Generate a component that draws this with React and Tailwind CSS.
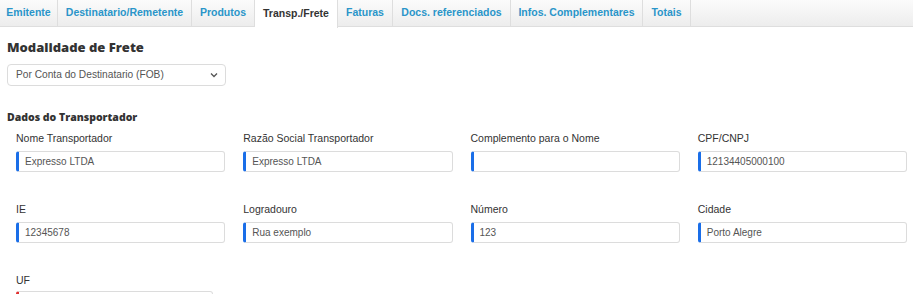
import React from "react";

const tabs = [
  { label: "Emitente", w: "w-[58px]" },
  { label: "Destinatario/Remetente", w: "w-[134px]" },
  { label: "Produtos", w: "w-[63px]" },
  { label: "Transp./Frete", w: "w-[83px]", active: true },
  { label: "Faturas", w: "w-[55px]" },
  { label: "Docs. referenciados", w: "w-[118px]" },
  { label: "Infos. Complementares", w: "w-[132px]" },
  { label: "Totais", w: "w-[48px]" },
];

const rows = [
  [
    { label: "Nome Transportador", value: "Expresso LTDA" },
    { label: "Razão Social Transportador", value: "Expresso LTDA" },
    { label: "Complemento para o Nome", value: "" },
    { label: "CPF/CNPJ", value: "12134405000100" },
  ],
  [
    { label: "IE", value: "12345678" },
    { label: "Logradouro", value: "Rua exemplo" },
    { label: "Número", value: "123" },
    { label: "Cidade", value: "Porto Alegre" },
  ],
];

const Field = ({ label, value }) => (
  <div className="flex flex-col">
    <label className="text-[10.5px] leading-[14px] text-[#333] mb-[6px]">{label}</label>
    <div className="h-[21px] rounded-[3px] border border-[#dcdcdc] border-l-[3px] border-l-[#1a6ee8] flex items-center px-[6px] text-[10px] text-[#555]">
      {value}
    </div>
  </div>
);

export default function App() {
  return (
    <div className="w-[913px] h-[294px] overflow-hidden bg-white font-['Liberation_Sans',Arial,sans-serif]">
      {/* tab strip */}
      <div className="flex h-[27px] bg-gradient-to-b from-[#fbfbfb] to-[#ededed] border-b border-[#dedede]">
        {tabs.map((t) => (
          <div
            key={t.label}
            className={`${t.w} shrink-0 flex items-center justify-center border-r border-[#dedede] text-[10.5px] font-bold ${
              t.active ? "bg-white text-[#333] h-[28px]" : "text-[#2a95c9]"
            }`}
          >
            {t.label}
          </div>
        ))}
      </div>

      <div className="pl-[7px] pr-[6px]">
        <h2 className="mt-[11px] text-[13px] leading-[19px] font-extrabold text-[#333] font-['Open_Sans',sans-serif]">
          Modalidade de Frete
        </h2>

        <div className="mt-[7px] w-[219px] h-[22px] rounded-[4px] border border-[#dcdcdc] flex items-center justify-between pl-[8px] pr-[7px] text-[10.2px] text-[#555]">
          <span>Por Conta do Destinatario (FOB)</span>
          <svg width="8" height="6" viewBox="0 0 8 6" fill="none" stroke="#555" strokeWidth="1.3">
            <path d="M1 1.5l3 3 3-3" />
          </svg>
        </div>

        <h3 className="mt-[24px] text-[10.5px] leading-[14px] font-extrabold text-[#333] font-['Open_Sans',sans-serif]">
          Dados do Transportador
        </h3>

        <div className="pl-[9px] mt-[7px] flex flex-col gap-[30px]">
          {rows.map((r, i) => (
            <div key={i} className="grid grid-cols-4 gap-x-[18px]">
              {r.map((f) => (
                <Field key={f.label} {...f} />
              ))}
            </div>
          ))}
          <div className="w-[197px] flex flex-col">
            <label className="text-[10.5px] leading-[14px] text-[#333] mb-[4px]">UF</label>
            <div className="h-[21px] rounded-[3px] border border-[#dcdcdc] border-l-[3px] border-l-[#e03030]" />
          </div>
        </div>
      </div>
    </div>
  );
}
